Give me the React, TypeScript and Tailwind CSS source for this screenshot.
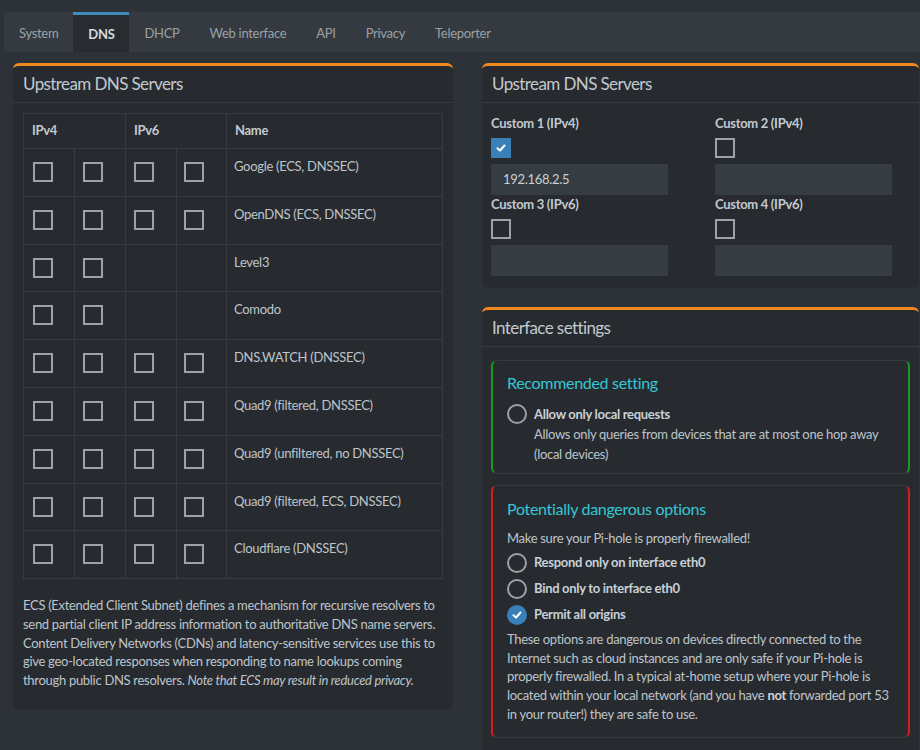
import React from "react";

const F = { fontFamily: "Lato, 'Open Sans', sans-serif" };

function Box({ checked = false }: { checked?: boolean }) {
  if (checked)
    return (
      <div className="w-5 h-5 bg-[#3a80b8] flex items-center justify-center">
        <svg width="12" height="12" viewBox="0 0 12 12">
          <path d="M2.5 6.2 L5 8.5 L9.5 3.5" stroke="#fff" strokeWidth="2" fill="none" strokeLinecap="round" strokeLinejoin="round" />
        </svg>
      </div>
    );
  return <div className="w-5 h-5 border-2 border-[#9da2a6]" />;
}

function Radio({ checked = false }: { checked?: boolean }) {
  if (checked)
    return (
      <div className="w-5 h-5 rounded-full bg-[#3a80b8] flex items-center justify-center shrink-0">
        <svg width="12" height="12" viewBox="0 0 12 12">
          <path d="M2.5 6.2 L5 8.5 L9.5 3.5" stroke="#fff" strokeWidth="2" fill="none" strokeLinecap="round" strokeLinejoin="round" />
        </svg>
      </div>
    );
  return <div className="w-5 h-5 rounded-full border-2 border-[#9da2a6] shrink-0" />;
}

const rows: { name: string; v6: boolean }[] = [
  { name: "Google (ECS, DNSSEC)", v6: true },
  { name: "OpenDNS (ECS, DNSSEC)", v6: true },
  { name: "Level3", v6: false },
  { name: "Comodo", v6: false },
  { name: "DNS.WATCH (DNSSEC)", v6: true },
  { name: "Quad9 (filtered, DNSSEC)", v6: true },
  { name: "Quad9 (unfiltered, no DNSSEC)", v6: true },
  { name: "Quad9 (filtered, ECS, DNSSEC)", v6: true },
  { name: "Cloudflare (DNSSEC)", v6: true },
];

function Card({ title, children, className = "" }: { title: string; children: React.ReactNode; className?: string }) {
  return (
    <div className={"bg-[#272b30] rounded-[6px] border-t-[3px] border-[#f0891e] " + className}>
      <div className="h-[37px] px-[10px] flex items-center border-b border-[#363c42] text-[17px] tracking-[-0.6px] text-[#c2c9cf]">
        {title}
      </div>
      {children}
    </div>
  );
}

const tabs = ["System", "DNS", "DHCP", "Web interface", "API", "Privacy", "Teleporter"];

export default function App() {
  return (
    <div className="w-[920px] h-[750px] overflow-hidden bg-[#2d3238] text-[#bdc4ca] text-[13px] tracking-[-0.3px]" style={F}>
      <div className="pt-[12px] pl-[4px]">
        <div className="h-[40px] bg-[#343a40] flex">
          {tabs.map((t) => (
            <div
              key={t}
              className={
                "px-[15px] flex items-center pt-[3px] " +
                (t === "DNS"
                  ? "bg-[#282c31] border-t-[3px] border-[#3c8dbc] pt-0 text-[#d4dadf] font-bold"
                  : "text-[#9aa1a7]")
              }
            >
              {t}
            </div>
          ))}
        </div>
      </div>
      <div className="flex gap-[29px] pl-[13px] pt-[11px]">
        <Card title="Upstream DNS Servers" className="w-[440px] h-[647px] shrink-0">
          <div className="p-[10px]">
            <table className="w-full border-collapse border border-[#363c42]">
              <thead>
                <tr className="h-[35px]">
                  <th colSpan={2} className="border border-[#363c42] text-left px-[8px] font-bold text-[#c2c9cf]">IPv4</th>
                  <th colSpan={2} className="border border-[#363c42] text-left px-[8px] font-bold text-[#c2c9cf]">IPv6</th>
                  <th className="border border-[#363c42] text-left px-[8px] font-bold text-[#c2c9cf]">Name</th>
                </tr>
              </thead>
              <tbody>
                {rows.map((r) => (
                  <tr key={r.name} className="h-[47.8px]">
                    <td className="border border-[#363c42] w-[51px] px-[9px] align-top pt-[13px]"><Box /></td>
                    <td className="border border-[#363c42] w-[51px] px-[8px] align-top pt-[13px]"><Box /></td>
                    <td className="border border-[#363c42] w-[51px] px-[8px] align-top pt-[13px]">{r.v6 && <Box />}</td>
                    <td className="border border-[#363c42] w-[50px] px-[7px] align-top pt-[13px]">{r.v6 && <Box />}</td>
                    <td className="border border-[#363c42] px-[7px] align-top pt-[8px]">{r.name}</td>
                  </tr>
                ))}
              </tbody>
            </table>
            <p className="mt-[17px] leading-[18.7px] text-[13px]">
              ECS (Extended Client Subnet) defines a mechanism for recursive resolvers to send partial client IP address
              information to authoritative DNS name servers. Content Delivery Networks (CDNs) and latency-sensitive services
              use this to give geo-located responses when responding to name lookups coming through public DNS resolvers.{" "}
              <i>Note that ECS may result in reduced privacy.</i>
            </p>
          </div>
        </Card>
        <div className="w-[437px] shrink-0 flex flex-col gap-[19px]">
          <Card title="Upstream DNS Servers" className="h-[225px]">
            <div className="px-[9px] pt-[11px] grid grid-cols-[224px_1fr]">
              {[
                ["Custom 1 (IPv4)", true, "192.168.2.5"],
                ["Custom 2 (IPv4)", false, ""],
                ["Custom 3 (IPv6)", false, ""],
                ["Custom 4 (IPv6)", false, ""],
              ].map(([label, c, v]) => (
                <div key={label as string} className="flex flex-col">
                  <div className="font-bold text-[#c2c9cf] leading-[18px]">{label}</div>
                  <div className="mt-[6px]"><Box checked={c as boolean} /></div>
                  <div className="mt-[6px] w-[177px] h-[31px] bg-[#353c42] px-[12px] flex items-center text-[#c9d0d6]">{v}</div>
                </div>
              ))}
            </div>
          </Card>
          <Card title="Interface settings" className="h-[460px]">
            <div className="px-[9px] pt-[13px]">
              <div className="rounded-[6px] border border-[#343a40] border-x-2 border-x-[#1a9a1a] h-[114px] px-[14px] pt-[10px]">
                <div className="text-[16px] text-[#35c7d4]">Recommended setting</div>
                <div className="flex gap-[7px] mt-[9px]">
                  <Radio />
                  <div>
                    <div className="font-bold text-[#c9d0d6] leading-[20px]">Allow only local requests</div>
                    <div className="leading-[20px]">Allows only queries from devices that are at most one hop away (local devices)</div>
                  </div>
                </div>
              </div>
              <div className="mt-[11px] rounded-[6px] border border-[#343a40] border-x-2 border-x-[#d81b1b] h-[253px] px-[14px] pt-[11px]">
                <div className="text-[16px] text-[#35c7d4]">Potentially dangerous options</div>
                <div className="mt-[8px] leading-[18px]">Make sure your Pi-hole is properly firewalled!</div>
                <div className="flex flex-col gap-[6px] mt-[6px]">
                  {[
                    ["Respond only on interface eth0", false],
                    ["Bind only to interface eth0", false],
                    ["Permit all origins", true],
                  ].map(([l, c]) => (
                    <div key={l as string} className="flex items-center gap-[7px]">
                      <Radio checked={c as boolean} />
                      <span className="font-bold text-[#c9d0d6]">{l}</span>
                    </div>
                  ))}
                </div>
                <p className="mt-[5px] leading-[18.7px]">
                  These options are dangerous on devices directly connected to the Internet such as cloud instances and are
                  only safe if your Pi-hole is properly firewalled. In a typical at-home setup where your Pi-hole is located
                  within your local network (and you have <b className="text-[#d0d6db]">not</b> forwarded port 53 in your
                  router!) they are safe to use.
                </p>
              </div>
            </div>
          </Card>
        </div>
      </div>
    </div>
  );
}
